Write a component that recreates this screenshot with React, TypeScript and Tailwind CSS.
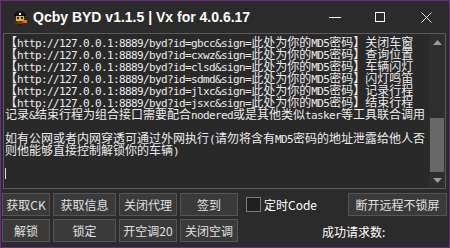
import React from "react";

const lines: string[] = [
  "【http://127.0.0.1:8889/byd?id=gbcc&sign=此处为你的MD5密码】关闭车窗",
  "【http://127.0.0.1:8889/byd?id=cxwz&sign=此处为你的MD5密码】查询位置",
  "【http://127.0.0.1:8889/byd?id=clsd&sign=此处为你的MD5密码】车辆闪灯",
  "【http://127.0.0.1:8889/byd?id=sdmd&sign=此处为你的MD5密码】闪灯鸣笛",
  "【http://127.0.0.1:8889/byd?id=jlxc&sign=此处为你的MD5密码】记录行程",
  "【http://127.0.0.1:8889/byd?id=jsxc&sign=此处为你的MD5密码】结束行程",
  "记录&结束行程为组合接口需要配合nodered或是其他类似tasker等工具联合调用",
  "",
  "如有公网或者内网穿透可通过外网执行(请勿将含有MD5密码的地址泄露给他人否",
  "则他能够直接控制解锁你的车辆)",
  "",
];

function Line({ text }: { text: string }) {
  const parts = text.match(/[\x00-\x7F]+|[^\x00-\x7F]+/g) || [];
  return (
    <div className="h-[12px] leading-[12px] whitespace-pre text-[#ececec]">
      {parts.map((p, i) =>
        /^[\x00-\x7F]/.test(p) ? (
          <span
            key={i}
            className="inline-block h-[12px] leading-[12px] font-['DejaVu_Sans_Mono',monospace] text-[11px] tracking-[-0.62px]"
          >
            {p}
          </span>
        ) : (
          <span
            key={i}
            className="inline-block h-[12px] leading-[12px] font-['Noto_Sans_CJK_SC',sans-serif] text-[12px]"
          >
            {p}
          </span>
        )
      )}
    </div>
  );
}

function Btn({ w, children }: { w: string; children: React.ReactNode }) {
  return (
    <div
      className={`${w} h-[23px] flex items-center justify-center border border-[#555555] bg-[#3a3a3a] text-[#e0e0e0] text-[12px] font-['Noto_Sans_CJK_SC',sans-serif] leading-none`}
    >
      {children}
    </div>
  );
}

function Icon() {
  return (
    <svg width="16" height="16" viewBox="0 0 16 16" shapeRendering="crispEdges">
      <rect x="4" y="1" width="8" height="2" fill="#1a1a1a" />
      <rect x="2" y="3" width="12" height="3" fill="#111" />
      <rect x="7" y="3" width="2" height="2" fill="#eee" />
      <rect x="4" y="6" width="8" height="5" fill="#e8b030" />
      <rect x="5" y="7" width="2" height="2" fill="#222" />
      <rect x="9" y="7" width="2" height="2" fill="#222" />
      <rect x="5" y="11" width="6" height="3" fill="#7a3a10" />
      <rect x="11" y="10" width="4" height="3" fill="#f07010" />
      <rect x="2" y="11" width="3" height="3" fill="#333" />
      <rect x="6" y="14" width="4" height="2" fill="#222" />
    </svg>
  );
}

export default function App() {
  return (
    <div className="w-[450px] h-[248px] bg-[#2b2b2b] border border-[#6a2d86] flex flex-col overflow-hidden">
      {/* Title bar */}
      <div className="h-[32px] flex items-center shrink-0">
        <div className="ml-[11px] mt-[1px]">
          <Icon />
        </div>
        <div className="ml-[5px] text-white font-bold text-[14px] font-['Liberation_Sans',Arial,sans-serif] leading-none">
          Qcby BYD v1.1.5 | Vx for 4.0.6.17
        </div>
        <div className="flex-1" />
        <div className="w-[12px] h-[1px] bg-white mr-[34px]" />
        <div className="w-[10px] h-[10px] border border-white mr-[36px]" />
        <svg width="11" height="11" viewBox="0 0 11 11" className="mr-[17px]">
          <path d="M0.5 0.5 L10.5 10.5 M10.5 0.5 L0.5 10.5" stroke="#ddd" strokeWidth="1" />
        </svg>
      </div>

      {/* Text box */}
      <div className="ml-[2px] mr-[3px] h-[156px] border border-[#5a5a5a] bg-[#292929] flex shrink-0">
        <div className="flex-1 pl-[1px] pt-[1px] overflow-hidden">
          {lines.map((l, i) => (
            <Line key={i} text={l} />
          ))}
          <div className="h-[12px] flex items-center pl-[0px]">
            <div className="w-[1px] h-[11px] bg-[#dddddd]" />
          </div>
        </div>
        <div className="w-[16px] bg-[#2e2e2e] flex flex-col items-center">
          <div className="h-[17px] flex items-center justify-center">
            <svg width="9" height="5" viewBox="0 0 9 5">
              <path d="M4.5 0 L9 5 L0 5 Z" fill="#9a9a9a" />
            </svg>
          </div>
          <div className="flex-1 w-full flex flex-col">
            <div className="h-[67px]" />
            <div className="h-[54px] mx-[1px] bg-[#686868]" />
          </div>
          <div className="h-[16px] flex items-center justify-center">
            <svg width="9" height="5" viewBox="0 0 9 5">
              <path d="M0 0 L9 0 L4.5 5 Z" fill="#9a9a9a" />
            </svg>
          </div>
        </div>
      </div>

      {/* Buttons */}
      <div className="flex mt-[4px] ml-[1px] items-start">
        <div className="flex flex-col gap-[3px]">
          <div className="flex gap-[3px]">
            <Btn w="w-[48px]">获取CK</Btn>
            <Btn w="w-[63px]">获取信息</Btn>
            <Btn w="w-[58px]">关闭代理</Btn>
            <Btn w="w-[58px]">签到</Btn>
          </div>
          <div className="flex gap-[3px]">
            <Btn w="w-[48px]">解锁</Btn>
            <Btn w="w-[63px]">锁定</Btn>
            <Btn w="w-[58px]">开空调20</Btn>
            <Btn w="w-[58px]">关闭空调</Btn>
          </div>
        </div>
        <div className="flex-1 flex flex-col">
          <div className="flex items-center h-[23px]">
            <div className="ml-[8px] w-[15px] h-[15px] border border-[#7a7a7a] bg-[#202020]" />
            <div className="ml-[3px] text-white text-[12px] font-['Noto_Sans_CJK_SC',sans-serif] leading-none">
              定时Code
            </div>
            <div className="flex-1" />
            <div className="mr-[2px]">
              <Btn w="w-[99px]">断开远程不锁屏</Btn>
            </div>
          </div>
          <div className="h-[26px] flex items-center">
            <div className="ml-[84px] mt-[6px] text-white text-[12px] font-['Noto_Sans_CJK_SC',sans-serif] leading-none">
              成功请求数:
            </div>
          </div>
        </div>
      </div>
    </div>
  );
}
